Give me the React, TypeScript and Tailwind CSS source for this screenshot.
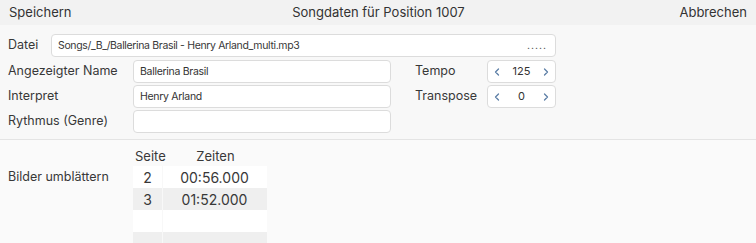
import { ChevronLeft, ChevronRight } from 'lucide-react'

const font = { fontFamily: 'Inter, "Open Sans", sans-serif' }

function TextField({ value, className = '' }: { value: string; className?: string }) {
  return (
    <div
      className={`flex h-[23px] items-center rounded-[4px] border border-[#dcdcdc] bg-white px-[6px] text-[10.5px] tracking-[-0.3px] text-[#333] ${className}`}
    >
      {value}
    </div>
  )
}

function Stepper({ value }: { value: string }) {
  return (
    <div className="flex h-[23px] w-[69px] items-center justify-between rounded-[4px] border border-[#dcdcdc] bg-white px-[3px] text-[11px] text-[#333]">
      <ChevronLeft size={12} strokeWidth={2.5} className="text-[#5b7ea6]" />
      <span>{value}</span>
      <ChevronRight size={12} strokeWidth={2.5} className="text-[#5b7ea6]" />
    </div>
  )
}

const rows = [
  { seite: '2', zeit: '00:56.000' },
  { seite: '3', zeit: '01:52.000' },
  { seite: '', zeit: '' },
  { seite: '', zeit: '' },
]

export default function App() {
  return (
    <div className="h-[243px] w-[756px] overflow-hidden bg-[#f8f8f8] text-[#383838]" style={font}>
      <div className="flex h-[25px] items-center justify-between bg-[#f2f2f2] px-[9px] text-[13px] text-[#333]">
        <span>Speichern</span>
        <span className="ml-[6px]">Songdaten für Position 1007</span>
        <span>Abbrechen</span>
      </div>

      <div className="flex flex-col gap-[3px] px-[8px] pt-[9px]">
        <div className="flex items-center">
          <span className="w-[43px] text-[12.5px]">Datei</span>
          <div className="flex h-[23px] w-[505px] items-center justify-between rounded-[4px] border border-[#dcdcdc] bg-white px-[6px] text-[10.5px]">
            <span className="tracking-[-0.35px]">Songs/_B_/Ballerina Brasil - Henry Arland_multi.mp3</span>
            <span className="pr-[2px] tracking-[1px] text-[#555]">.....</span>
          </div>
        </div>

        <div className="flex gap-[24px]">
          <div className="flex flex-col gap-[2px]">
            <div className="flex items-center">
              <span className="w-[125px] text-[12.5px]">Angezeigter Name</span>
              <TextField value="Ballerina Brasil" className="w-[258px]" />
            </div>
            <div className="flex items-center">
              <span className="w-[125px] text-[12.5px]">Interpret</span>
              <TextField value="Henry Arland" className="w-[258px]" />
            </div>
            <div className="flex items-center">
              <span className="w-[125px] text-[12.5px]">Rythmus (Genre)</span>
              <TextField value="" className="w-[258px]" />
            </div>
          </div>

          <div className="flex flex-col gap-[2px]">
            <div className="flex items-center">
              <span className="w-[72px] text-[12.5px]">Tempo</span>
              <Stepper value="125" />
            </div>
            <div className="flex items-center">
              <span className="w-[72px] text-[12.5px]">Transpose</span>
              <Stepper value="0" />
            </div>
          </div>
        </div>
      </div>

      <div className="mt-[6px] border-t border-[#e4e4e4] bg-[#fafafa] pt-[7px]">
        <div className="flex px-[8px]">
          <span className="mt-[21px] w-[125px] text-[12.5px]">Bilder umblättern</span>
          <div className="flex flex-col text-[13px]">
            <div className="flex h-[19px] items-center">
              <span className="w-[31px] pl-[2px] text-center">Seite</span>
              <span className="w-[103px] text-center">Zeiten</span>
            </div>
            {rows.map((row, i) => (
              <div
                key={i}
                className={`flex h-[22px] items-center ${i % 2 === 0 ? 'bg-white' : 'bg-[#efefef]'}`}
              >
                <span className="w-[29px] text-center text-[14px]">{row.seite}</span>
                <span className="h-full w-px bg-[#f8f8f8]" />
                <span className="w-[103px] text-center text-[14px]">{row.zeit}</span>
              </div>
            ))}
          </div>
        </div>
      </div>
    </div>
  )
}
